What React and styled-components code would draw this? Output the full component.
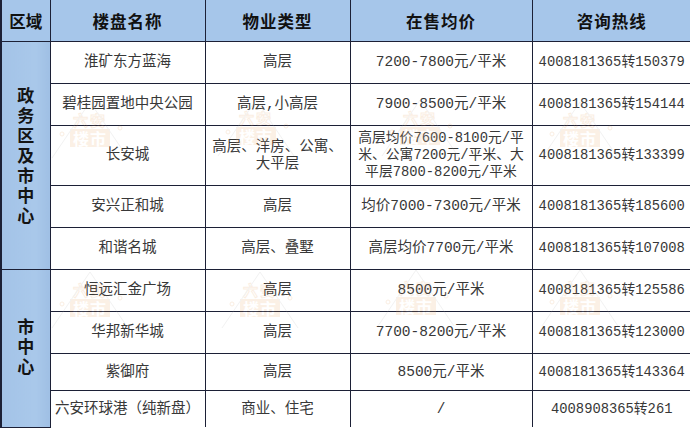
import React from 'react';
import styled, { createGlobalStyle } from 'styled-components';

const GlobalStyle = createGlobalStyle`
  html, body {
    margin: 0;
    padding: 0;
    background: #ffffff;
  }
`;

const Frame = styled.div`
  position: relative;
  width: 690px;
  height: 428px;
  overflow: hidden;
  background: #ffffff;
`;

const Sheet = styled.table`
  border-collapse: collapse;
  table-layout: fixed;
  width: 690px;
  font-family: "Liberation Mono", "Noto Sans CJK SC", monospace;
`;

const HeadCell = styled.th`
  height: 41px;
  padding: 0;
  background: #a6c6ea;
  color: #111111;
  font-family: "Noto Sans CJK SC", sans-serif;
  font-size: 16.5px;
  font-weight: 700;
  letter-spacing: ${(p) => (p.$first ? 0 : 1)}px;
  text-align: center;
  border: 1px solid #1c2036;
  border-top: none;
  border-left-width: ${(p) => (p.$first ? 2 : 1)}px;
  &:last-child {
    border-right: none;
  }
`;

const Cell = styled.td`
  height: ${(p) => p.$h - 1}px;
  padding: 0 ${(p) => (p.$tight ? 0 : 2)}px;
  color: #383838;
  font-size: ${(p) => (p.$tight ? 13.8 : 14.5)}px;
  line-height: 17px;
  text-align: center;
  white-space: ${(p) => (p.$wrap ? 'normal' : 'nowrap')};
  overflow: hidden;
  border: 1px solid #1c2036;
  &:last-child {
    border-right: none;
  }
  tr:last-child > & {
    border-bottom: none;
  }
`;

const RegionCell = styled.td`
  padding: 0;
  background: linear-gradient(90deg, #a3c3e7 0%, #a9c8ea 70%, #9fbfe4 100%);
  border: 1px solid #1c2036;
  border-left: 2px solid #1c2036;
  text-align: center;
  vertical-align: middle;
  tr:last-child > & {
    border-bottom: none;
  }
`;

const RegionText = styled.span`
  display: inline-block;
  width: 18px;
  font-family: "Noto Sans CJK SC", sans-serif;
  font-size: 17px;
  font-weight: 700;
  line-height: 20px;
  color: #141414;
  word-break: break-all;
  margin-top: ${(p) => p.$shift || 0}px;
`;

const Watermark = styled.div`
  position: absolute;
  left: ${(p) => p.$x}px;
  top: ${(p) => p.$y}px;
  width: 56px;
  display: flex;
  flex-direction: column;
  align-items: center;
  pointer-events: none;
  opacity: 0.16;
  font-family: "Noto Sans CJK SC", sans-serif;
  font-weight: 700;
  line-height: 1;
`;

const MarkTop = styled.span`
  font-size: 15px;
  color: transparent;
  -webkit-text-stroke: 1px #e39a4e;
  letter-spacing: 2px;
`;

const MarkBottom = styled.span`
  margin-top: 2px;
  padding: 1px 3px;
  font-size: 16px;
  color: #ffffff;
  background: #e9a866;
  letter-spacing: 1px;
`;

const Roof = styled.svg`
  position: absolute;
  left: -14px;
  top: -14px;
`;

const groups = [
  {
    region: '政务区及市中心',
    shift: 0,
    rows: [
      { h: 42, name: '淮矿东方蓝海', type: '高层', price: '7200-7800元/平米', tel: '4008181365转150379' },
      { h: 42, name: '碧桂园置地中央公园', type: '高层,小高层', price: '7900-8500元/平米', tel: '4008181365转154144' },
      {
        h: 60,
        name: '长安城',
        type: '高层、洋房、公寓、大平层',
        price: ['高层均价7600-8100元/平', '米、公寓7200元/平米、大', '平层7800-8200元/平米'],
        tel: '4008181365转133399',
      },
      { h: 42, name: '安兴正和城', type: '高层', price: '均价7000-7300元/平米', tel: '4008181365转185600' },
      { h: 42, name: '和谐名城', type: '高层、叠墅', price: '高层均价7700元/平米', tel: '4008181365转107008' },
    ],
  },
  {
    region: '市中心',
    shift: -2,
    rows: [
      { h: 42, name: '恒远汇金广场', type: '高层', price: '8500元/平米', tel: '4008181365转125586' },
      { h: 42, name: '华邦新华城', type: '高层', price: '7700-8200元/平米', tel: '4008181365转123000' },
      { h: 37, name: '紫御府', type: '高层', price: '8500元/平米', tel: '4008181365转143364' },
      { h: 37, name: '六安环球港（纯新盘）', type: '商业、住宅', price: '/', tel: '4008908365转261' },
    ],
  },
];

const marks = [
  { x: 62, y: 112 }, { x: 228, y: 110 }, { x: 392, y: 110 }, { x: 552, y: 112 },
  { x: 62, y: 282 }, { x: 232, y: 282 }, { x: 388, y: 280 }, { x: 552, y: 280 },
];

const PriceLines = ({ price }) =>
  Array.isArray(price)
    ? price.map((line, i) => (
        <React.Fragment key={i}>
          {line}
          {i < price.length - 1 && <br />}
        </React.Fragment>
      ))
    : price;

const App = () => {
  return (
    <>
      <GlobalStyle />
      <Frame>
        <Sheet>
          <colgroup>
            <col style={{ width: 49 }} />
            <col style={{ width: 155 }} />
            <col style={{ width: 145 }} />
            <col style={{ width: 182 }} />
            <col style={{ width: 159 }} />
          </colgroup>
          <tbody>
            <tr>
              <HeadCell $first>区域</HeadCell>
              <HeadCell>楼盘名称</HeadCell>
              <HeadCell>物业类型</HeadCell>
              <HeadCell>在售均价</HeadCell>
              <HeadCell>咨询热线</HeadCell>
            </tr>
            {groups.map((g, gi) =>
              g.rows.map((r, ri) => (
                <tr key={`${gi}-${ri}`}>
                  {ri === 0 && (
                    <RegionCell rowSpan={g.rows.length}>
                      <RegionText $shift={g.shift}>{g.region}</RegionText>
                    </RegionCell>
                  )}
                  <Cell $h={r.h}>{r.name}</Cell>
                  <Cell $h={r.h} $wrap>{r.type}</Cell>
                  <Cell $h={r.h} $tight={Array.isArray(r.price)}>
                    <PriceLines price={r.price} />
                  </Cell>
                  <Cell $h={r.h} $tight>{r.tel}</Cell>
                </tr>
              ))
            )}
          </tbody>
        </Sheet>
        {marks.map((m, i) => (
          <Watermark key={i} $x={m.x} $y={m.y}>
            <Roof width="84" height="70" viewBox="0 0 84 70">
              <path d="M4 60 L42 4 L80 60" fill="none" stroke="#b0b0b0" strokeWidth="1" />
              <circle cx="14" cy="36" r="2" fill="none" stroke="#e39a4e" />
              <circle cx="72" cy="30" r="2" fill="none" stroke="#e39a4e" />
            </Roof>
            <MarkTop>六安</MarkTop>
            <MarkBottom>楼市</MarkBottom>
          </Watermark>
        ))}
      </Frame>
    </>
  );
};

export default App;
